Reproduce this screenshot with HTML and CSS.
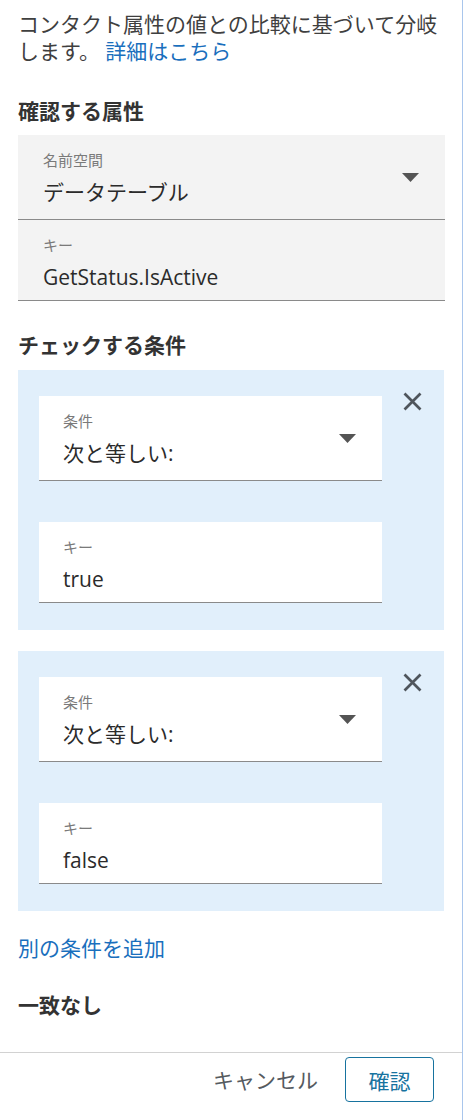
FILE: index.html
```html
<!DOCTYPE html>
<html lang="ja">
<head>
<meta charset="utf-8">
<title>条件の確認</title>
<link rel="stylesheet" href="styles.css">
</head>
<body>
<div class="panel">
  <p class="intro">コンタクト属性の値との比較に基づいて分岐します。 <a class="link" href="#">詳細はこちら</a></p>

  <h2 class="section-title section-title--first">確認する属性</h2>
  <div class="field field--grey field--select">
    <div class="field-body">
      <div class="field-label">名前空間</div>
      <div class="field-value">データテーブル</div>
    </div>
    <svg class="caret" width="17" height="9" viewBox="0 0 17 9"><polygon points="0,0 17,0 8.5,9" fill="#545454"/></svg>
  </div>
  <div class="field field--grey field--input">
    <div class="field-body">
      <div class="field-label">キー</div>
      <div class="field-value">GetStatus.IsActive</div>
    </div>
  </div>

  <h2 class="section-title section-title--conditions">チェックする条件</h2>

  <div class="condition">
    <div class="condition-fields">
      <div class="field field--white field--select">
        <div class="field-body">
          <div class="field-label">条件</div>
          <div class="field-value">次と等しい:</div>
        </div>
        <svg class="caret" width="17" height="9" viewBox="0 0 17 9"><polygon points="0,0 17,0 8.5,9" fill="#545454"/></svg>
      </div>
      <div class="field field--white field--input field--spaced">
        <div class="field-body">
          <div class="field-label">キー</div>
          <div class="field-value">true</div>
        </div>
      </div>
    </div>
    <button class="close" type="button" aria-label="削除">
      <svg width="19" height="19" viewBox="0 0 19 19"><path d="M1.5 1.5 L17.5 17.5 M17.5 1.5 L1.5 17.5" stroke="#4f555c" stroke-width="2.7" fill="none"/></svg>
    </button>
  </div>

  <div class="condition condition--next">
    <div class="condition-fields">
      <div class="field field--white field--select">
        <div class="field-body">
          <div class="field-label">条件</div>
          <div class="field-value">次と等しい:</div>
        </div>
        <svg class="caret" width="17" height="9" viewBox="0 0 17 9"><polygon points="0,0 17,0 8.5,9" fill="#545454"/></svg>
      </div>
      <div class="field field--white field--input field--spaced">
        <div class="field-body">
          <div class="field-label">キー</div>
          <div class="field-value">false</div>
        </div>
      </div>
    </div>
    <button class="close" type="button" aria-label="削除">
      <svg width="19" height="19" viewBox="0 0 19 19"><path d="M1.5 1.5 L17.5 17.5 M17.5 1.5 L1.5 17.5" stroke="#4f555c" stroke-width="2.7" fill="none"/></svg>
    </button>
  </div>

  <a class="link add-link" href="#">別の条件を追加</a>

  <h2 class="section-title section-title--nomatch">一致なし</h2>

  <div class="footer">
    <button class="btn-cancel" type="button">キャンセル</button>
    <button class="btn-confirm" type="button">確認</button>
  </div>
</div>
</body>
</html>
```

FILE: styles.css
```css
* { box-sizing: border-box; }

html, body {
  margin: 0;
  padding: 0;
  background: #ffffff;
}

body {
  font-family: "Open Sans", "Noto Sans CJK JP", sans-serif;
  color: #333333;
}

.panel {
  width: 463px;
  min-height: 1120px;
  border-right: 1px solid #a9c6ec;
  padding-top: 11px;
}

.intro {
  margin: 0;
  padding: 0 18px;
  font-size: 21px;
  line-height: 27px;
  color: #3f3f3f;
}

.link {
  color: #1a6fbd;
  text-decoration: none;
}

.section-title {
  margin: 0 18px;
  font-size: 21px;
  line-height: 28px;
  font-weight: 700;
  color: #333333;
}

.section-title--first { margin-top: 32px; margin-bottom: 10px; }
.section-title--conditions { margin-top: 30px; margin-bottom: 11px; }
.section-title--nomatch { margin-top: 29px; }

.field {
  display: flex;
  align-items: center;
  padding: 0 26px 0 25px;
  border-bottom: 1px solid #8a8a8a;
}

.field--grey {
  margin: 0 18px;
  width: 427px;
  background: #f3f3f3;
}

.field--white {
  width: 343px;
  background: #ffffff;
  padding-left: 24px;
}

.field--select { height: 85px; }
.field--select .field-body { padding-top: 2px; }
.field--input { height: 81px; align-items: flex-start; }
.field--spaced { margin-top: 41px; }

.field-body {
  flex: 1;
  min-width: 0;
}

.field--input .field-body { padding-top: 15px; }

.field-label {
  font-size: 15px;
  line-height: 20px;
  color: #7a7a7a;
}

.field-value {
  margin-top: 8px;
  font-size: 21px;
  line-height: 28px;
  color: #2b2b2b;
}

.caret {
  flex: 0 0 auto;
  display: block;
}

.condition {
  display: flex;
  align-items: flex-start;
  margin: 0 18px;
  width: 426px;
  height: 260px;
  padding: 26px 0 0 21px;
  background: #e1effb;
}

.condition--next { margin-top: 21px; }

.condition-fields {
  flex: 0 0 343px;
}

.close {
  margin: -4px 0 0 21px;
  padding: 0;
  width: 19px;
  height: 19px;
  border: 0;
  background: transparent;
  cursor: pointer;
}

.close svg { display: block; }

.add-link {
  display: block;
  margin: 23px 18px 0;
  font-size: 21px;
  line-height: 28px;
}

.footer {
  display: flex;
  justify-content: flex-end;
  align-items: center;
  gap: 27px;
  margin-top: 33px;
  padding: 4px 28px 0 0;
  border-top: 1px solid #d2d2d2;
}

.btn-cancel {
  padding: 0;
  border: 0;
  background: transparent;
  font-family: inherit;
  font-size: 21px;
  line-height: 28px;
  color: #555a60;
}

.btn-confirm {
  width: 89px;
  height: 45px;
  padding: 0;
  border: 1.5px solid #17739f;
  border-radius: 4px;
  background: #ffffff;
  font-family: inherit;
  font-size: 21px;
  color: #17739f;
}
```
